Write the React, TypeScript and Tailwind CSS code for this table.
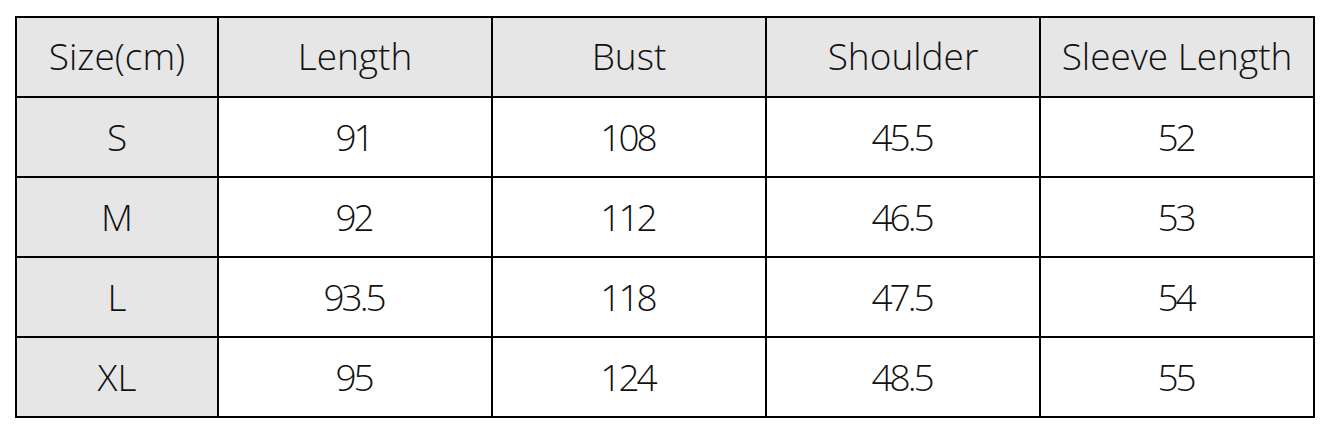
const headers = ["Size(cm)", "Length", "Bust", "Shoulder", "Sleeve Length"];

const rows = [
  ["S", "91", "108", "45.5", "52"],
  ["M", "92", "112", "46.5", "53"],
  ["L", "93.5", "118", "47.5", "54"],
  ["XL", "95", "124", "48.5", "55"],
];

export default function App() {
  return (
    <div className="min-h-[433px] w-[1330px] bg-white pl-[15px] pt-[16px] font-['Open_Sans',sans-serif] text-[37px] font-light leading-none text-[#111]">
      <div className="grid w-fit grid-cols-[200px_repeat(4,272px)] gap-[2px] bg-black p-[2px]">
        {headers.map((h) => (
          <div key={h} className="flex h-[78px] items-center justify-center bg-[#e6e6e6] pb-[4px]">
            {h}
          </div>
        ))}
        {rows.map((row) =>
          row.map((cell, i) =>
            i === 0 ? (
              <div key={cell} className="flex h-[78px] items-center justify-center bg-[#e6e6e6] pb-[2px]">
                {cell}
              </div>
            ) : (
              <div
                key={row[0] + i}
                className="flex h-[78px] items-center justify-center bg-white pb-[2px] pr-[3px] tracking-[-3px]"
              >
                {cell}
              </div>
            )
          )
        )}
      </div>
    </div>
  );
}
